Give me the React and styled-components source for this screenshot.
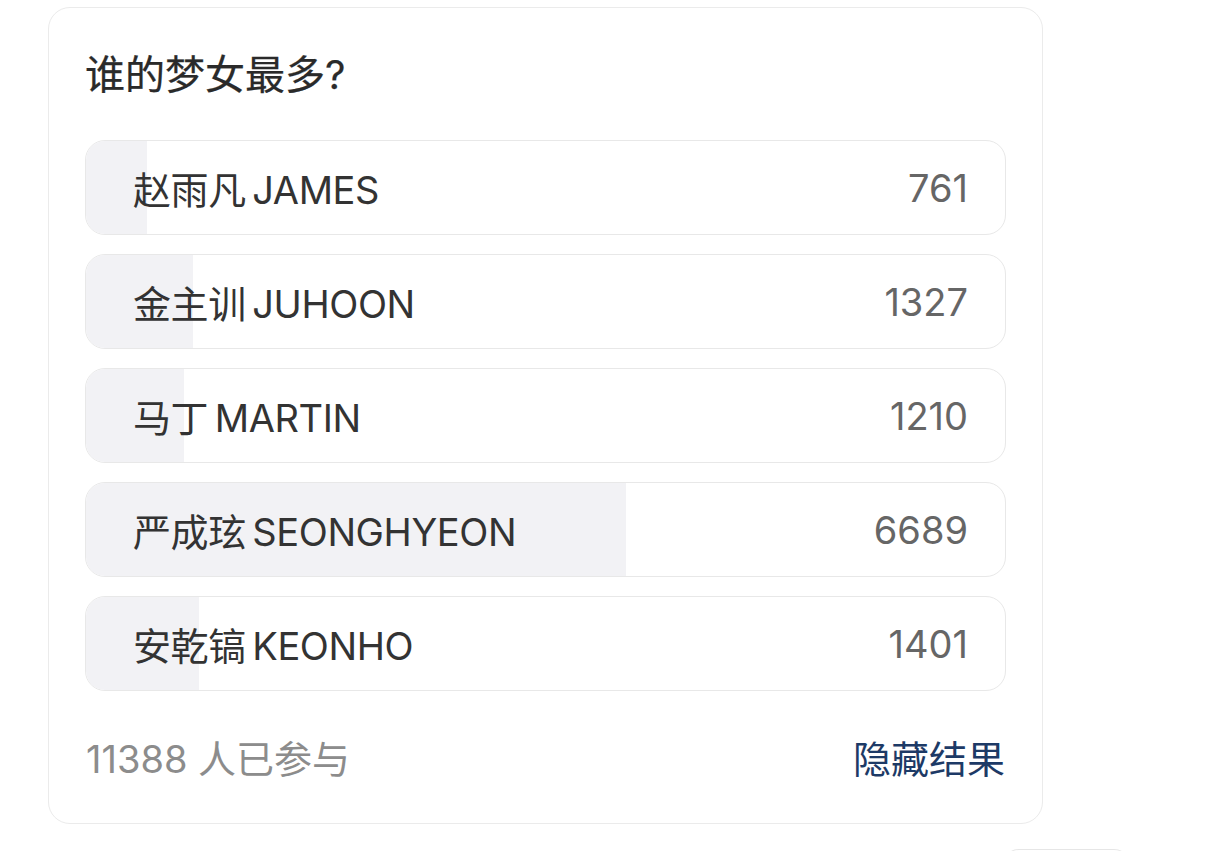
import React from 'react';
import styled, { createGlobalStyle } from 'styled-components';

const GlobalStyle = createGlobalStyle`
  html, body {
    margin: 0;
    padding: 0;
    background: #fff;
  }
  body {
    font-family: Inter, 'Noto Sans CJK SC', 'Noto Sans', sans-serif;
    -webkit-font-smoothing: antialiased;
  }
`;

const Page = styled.div`
  padding: 7px 0 0 48px;
  height: 851px;
  box-sizing: border-box;
  overflow: hidden;
`;

const Card = styled.section`
  width: 995px;
  box-sizing: border-box;
  padding: 40px 36px 37px;
  border: 1px solid #ebebeb;
  border-radius: 22px;
  background: #fff;
`;

const Title = styled.h2`
  margin: 0;
  font-size: 40px;
  line-height: 54px;
  font-weight: 400;
  -webkit-text-stroke: 0.25px #2a2a2a;
  color: #2a2a2a;
`;

const Options = styled.ul`
  list-style: none;
  margin: 38px 0 0;
  padding: 0;
  display: flex;
  flex-direction: column;
  gap: 19px;
`;

const Option = styled.li`
  position: relative;
  height: 95px;
  box-sizing: border-box;
  border: 1px solid #e8e8e8;
  border-radius: 20px;
  overflow: hidden;
  display: flex;
  align-items: center;
  justify-content: space-between;
  padding: 0 37px 0 47px;
`;

const Fill = styled.div`
  position: absolute;
  left: 0;
  top: 0;
  bottom: 0;
  background: #f2f2f5;
`;

const Name = styled.span`
  position: relative;
  font-size: 38px;
  letter-spacing: -0.4px;
  color: #333;
  white-space: nowrap;
`;

const Count = styled.span`
  position: relative;
  font-size: 38px;
  color: #666;
`;

const Footer = styled.div`
  margin-top: 41px;
  display: flex;
  justify-content: space-between;
  align-items: center;
  line-height: 54px;
  font-size: 38px;
`;

const Joined = styled.span`
  color: #8c8c8c;
  padding-left: 1px;
`;

const HideLink = styled.a`
  color: #1d3a66;
  text-decoration: none;
  cursor: pointer;
  margin-right: 1px;
`;

const NextCard = styled.div`
  margin: 25px 0 0 955px;
  width: 127px;
  height: 20px;
  border-top: 1px solid #e6e6e6;
  border-radius: 16px 16px 0 0;
`;

const options = [
  { name: '赵雨凡\u2009JAMES', votes: 761 },
  { name: '金主训\u2009JUHOON', votes: 1327 },
  { name: '马丁\u2009MARTIN', votes: 1210 },
  { name: '严成玹\u2009SEONGHYEON', votes: 6689 },
  { name: '安乾镐\u2009KEONHO', votes: 1401 },
];

const total = 11388;

export default function App() {
  return (
    <>
      <GlobalStyle />
      <Page>
        <Card>
          <Title>谁的梦女最多?</Title>
          <Options>
            {options.map((o) => (
              <Option key={o.name}>
                <Fill style={{ width: `${(o.votes / total) * 100}%` }} />
                <Name>{o.name}</Name>
                <Count>{o.votes}</Count>
              </Option>
            ))}
          </Options>
          <Footer>
            <Joined>{total} 人已参与</Joined>
            <HideLink>隐藏结果</HideLink>
          </Footer>
        </Card>
        <NextCard />
      </Page>
    </>
  );
}
